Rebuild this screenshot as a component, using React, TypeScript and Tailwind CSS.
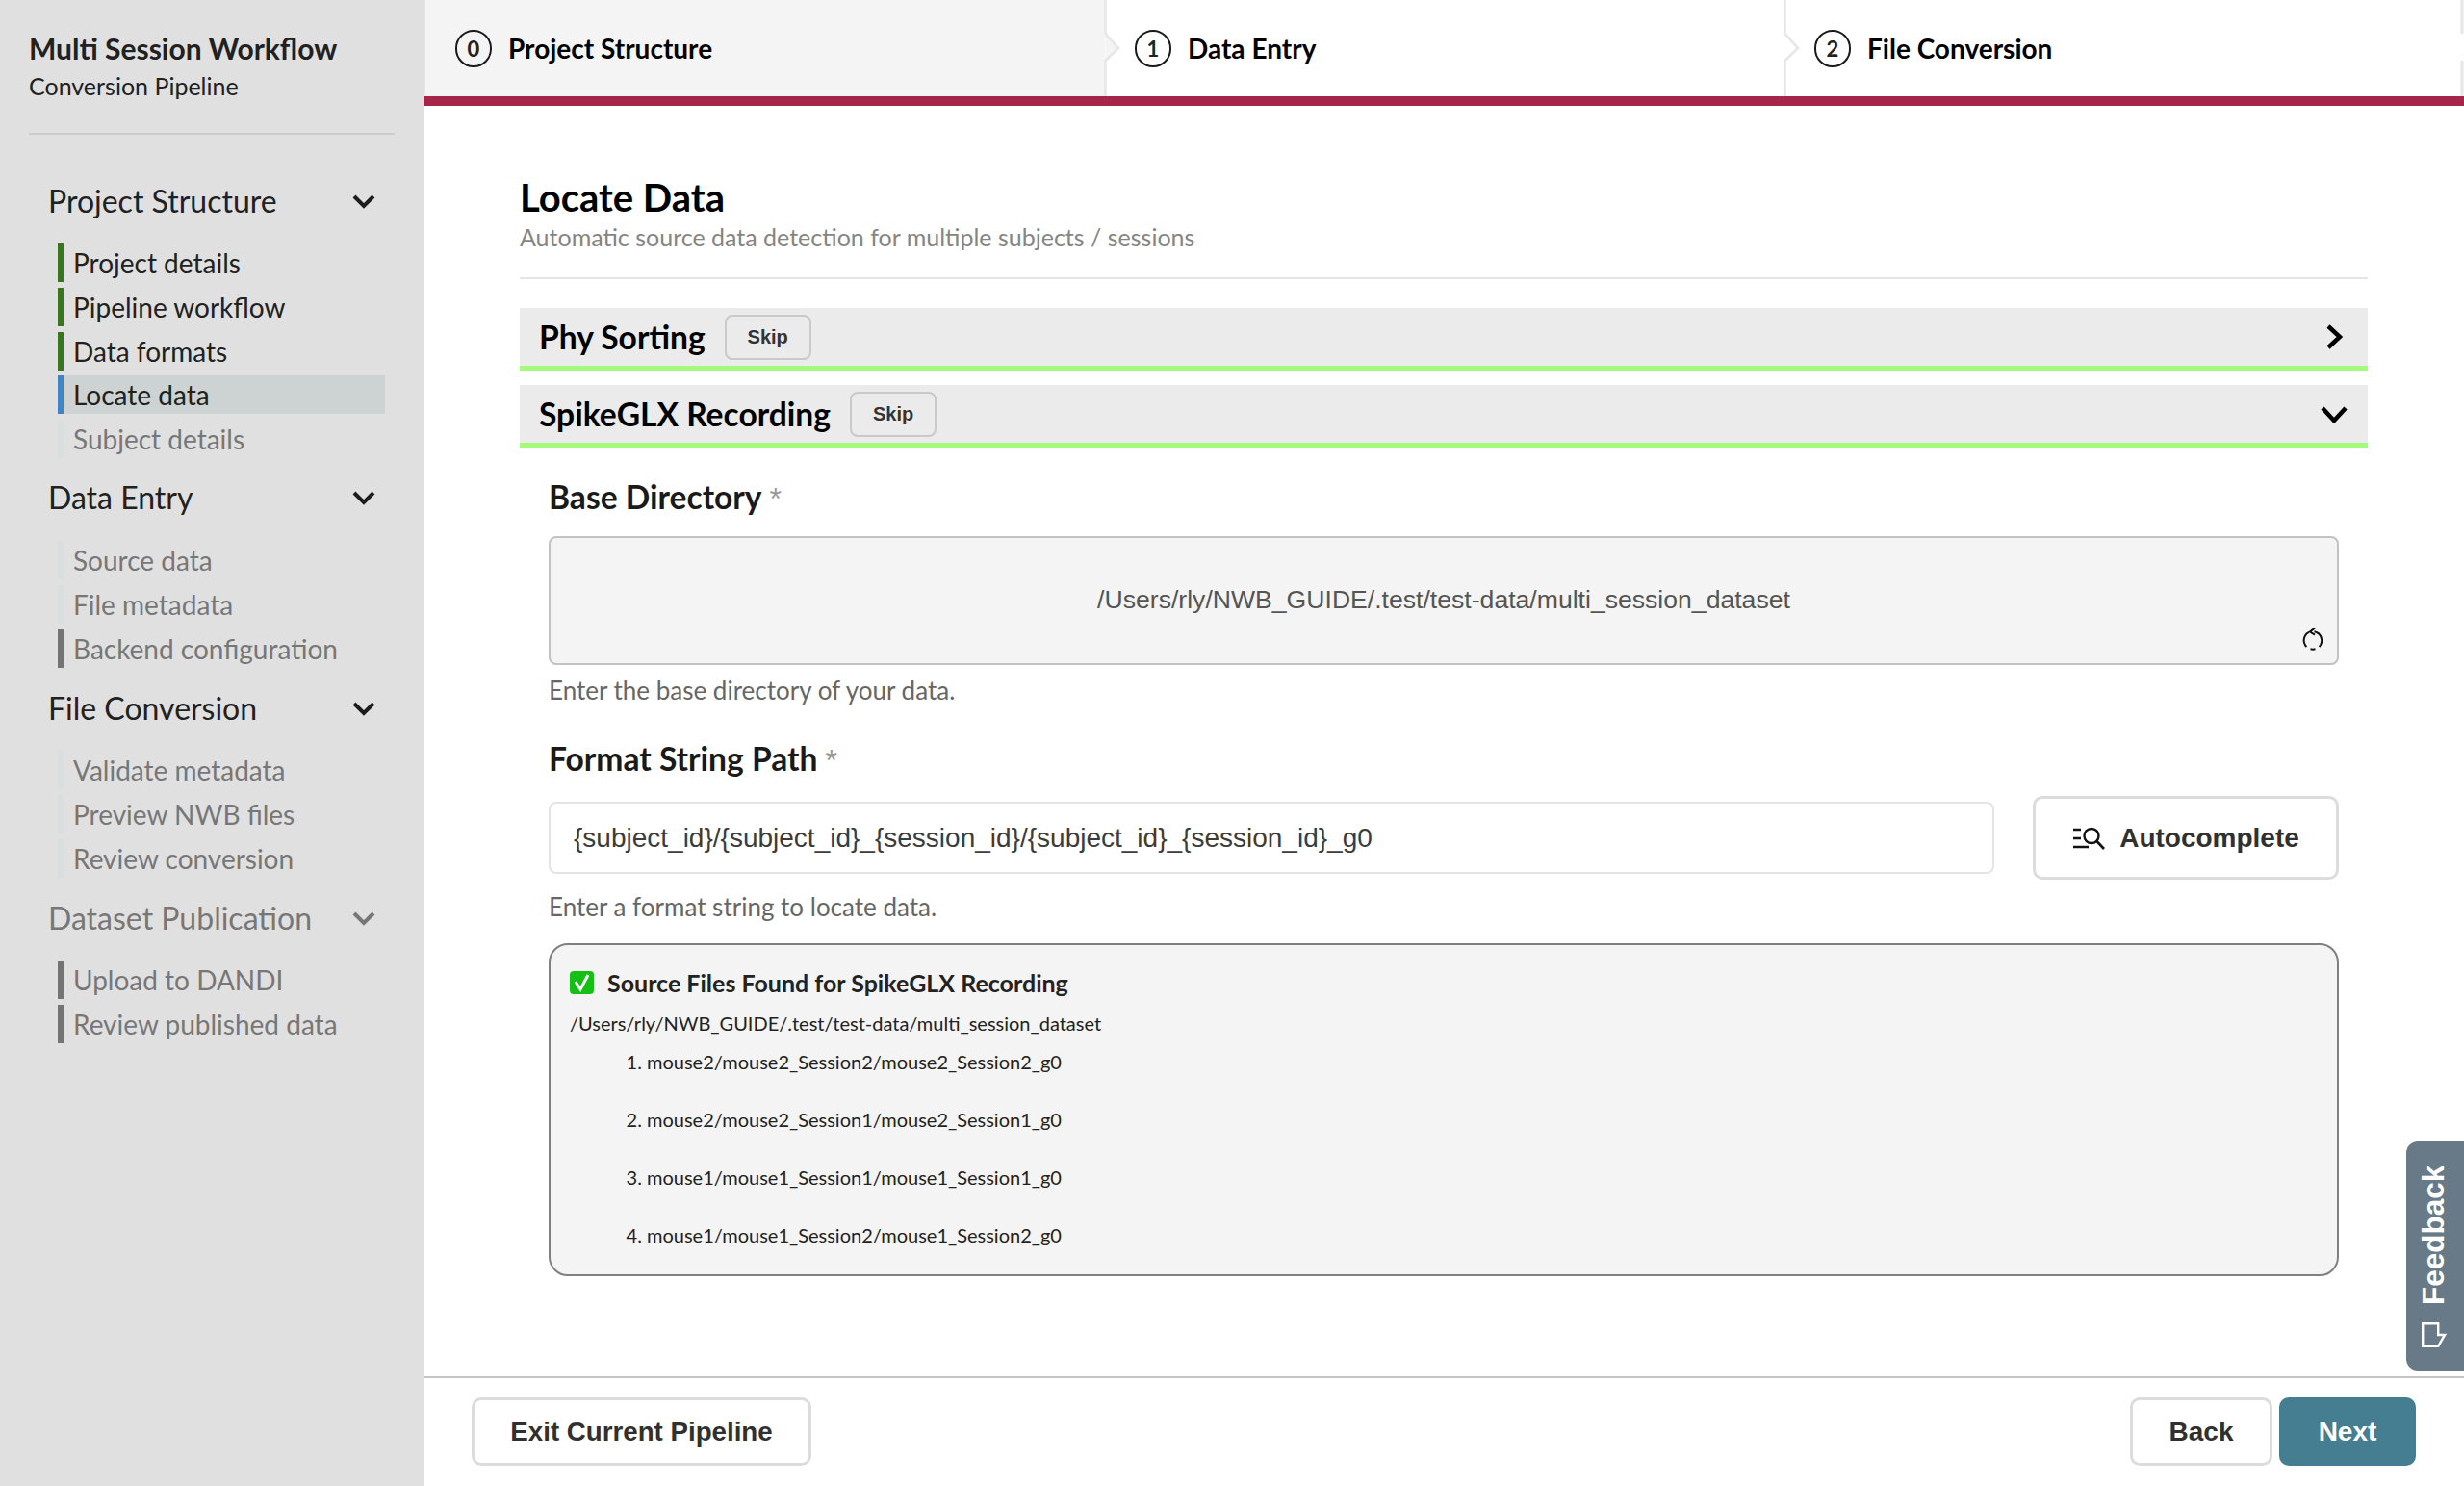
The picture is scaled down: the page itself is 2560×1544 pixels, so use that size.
import React from "react";

const lato = "font-['Lato','Noto_Sans',sans-serif]";
const helv = "font-['Liberation_Sans',Arial,sans-serif]";

type Item = { label: string; bar: string; text: string; bg?: string };
type Section = { title: string; muted?: boolean; gap: string; listGap: string; items: Item[] };

const GREEN = "bg-[#38761d]";
const BLUE = "bg-[#3d85c6]";
const LIGHT = "bg-[#d9dedf]";
const DARK = "bg-[#747474]";
const INK = "text-[#212121]";
const MUTE = "text-[#777777]";

const sections: Section[] = [
  {
    title: "Project Structure",
    gap: "mt-0",
    listGap: "mt-[22px]",
    items: [
      { label: "Project details", bar: GREEN, text: INK },
      { label: "Pipeline workflow", bar: GREEN, text: INK },
      { label: "Data formats", bar: GREEN, text: INK },
      { label: "Locate data", bar: BLUE, text: INK, bg: "bg-[#cdd3d3]" },
      { label: "Subject details", bar: LIGHT, text: MUTE },
    ],
  },
  {
    title: "Data Entry",
    gap: "mt-[19px]",
    listGap: "mt-[23px]",
    items: [
      { label: "Source data", bar: LIGHT, text: MUTE },
      { label: "File metadata", bar: LIGHT, text: MUTE },
      { label: "Backend configuration", bar: DARK, text: MUTE },
    ],
  },
  {
    title: "File Conversion",
    gap: "mt-[20.5px]",
    listGap: "mt-[22px]",
    items: [
      { label: "Validate metadata", bar: LIGHT, text: MUTE },
      { label: "Preview NWB files", bar: LIGHT, text: MUTE },
      { label: "Review conversion", bar: LIGHT, text: MUTE },
    ],
  },
  {
    title: "Dataset Publication",
    muted: true,
    gap: "mt-[20.5px]",
    listGap: "mt-[22px]",
    items: [
      { label: "Upload to DANDI", bar: DARK, text: MUTE },
      { label: "Review published data", bar: DARK, text: MUTE },
    ],
  },
];

function NavChevron({ muted }: { muted?: boolean }) {
  return (
    <svg width="24" height="16" viewBox="0 0 24 16" className={muted ? "text-[#777777]" : "text-[#1c1c1c]"}>
      <path d="M2 3 L12 13 L22 3" fill="none" stroke="currentColor" strokeWidth="4" />
    </svg>
  );
}

function Sidebar() {
  return (
    <aside className={`w-[440px] shrink-0 bg-[#e0e0e0] flex flex-col ${lato}`}>
      <div className="mx-[30px] pt-[30px] pb-[30px] border-b-2 border-[#cccccc]">
        <div className="text-[30px] leading-[40px] font-bold text-[#212121]">Multi Session Workflow</div>
        <div className="text-[25px] leading-[38px] text-[#212121]">Conversion Pipeline</div>
      </div>
      <nav className="pt-[47px] pl-[50px] pr-[40px]">
        {sections.map((s) => (
          <section key={s.title} className={s.gap}>
            <div className="h-[44px] flex items-center justify-between pr-[10px]">
              <span className={`text-[32px] ${s.muted ? MUTE : "text-[#212121]"}`}>{s.title}</span>
              <NavChevron muted={s.muted} />
            </div>
            <ul className={`${s.listGap} flex flex-col gap-[5.75px] pl-[10px]`}>
              {s.items.map((it) => (
                <li key={it.label} className={`h-[40px] flex items-center ${it.bg ?? ""}`}>
                  <span className={`w-[6px] h-full shrink-0 ${it.bar}`} />
                  <span className={`pl-[10px] text-[28px] ${it.text}`}>{it.label}</span>
                </li>
              ))}
            </ul>
          </section>
        ))}
      </nav>
    </aside>
  );
}

function Step({ n, label, active, last }: { n: number; label: string; active?: boolean; last?: boolean }) {
  return (
    <div className={`relative flex-1 h-full flex items-center pl-[31px] gap-[17px] ${active ? "bg-[#f4f4f4] border-l-2 border-[#e6e6e6]" : "bg-white"}`}>
      <span className="w-[38px] h-[39px] rounded-full border-2 border-[#1a1a1a] flex items-center justify-center text-[22px] font-bold text-[#222]">{n}</span>
      <span className="text-[28px] font-bold text-black">{label}</span>
      {last ? (
        <svg width="4" height="100" viewBox="0 0 4 100" className="absolute right-0 top-0">
          <path d="M2 0 V35 M2 63 V100" stroke="#e6e6e6" strokeWidth="3" fill="none" />
        </svg>
      ) : (
        <svg width="18" height="100" viewBox="0 0 18 100" className="absolute -right-[17px] top-0 z-10">
          <path d="M1.5 0 V35 L15 50 L1.5 63 V100" stroke="#e6e6e6" strokeWidth="2.5" fill={active ? "#f4f4f4" : "#ffffff"} />
        </svg>
      )}
    </div>
  );
}

function AccordionHead({ title, open }: { title: string; open?: boolean }) {
  return (
    <div className="h-[66px] bg-[#ebebeb] border-b-[6px] border-[#a4fb7b] flex items-center pl-[20px] pr-[20px]">
      <span className="text-[33.6px] font-bold text-black">{title}</span>
      <span className={`ml-[20px] w-[90px] h-[47px] border-2 border-[#c9c9c9] rounded-[8px] flex items-center justify-center text-[20px] font-bold text-[#333] ${helv}`}>Skip</span>
      <span className="ml-auto w-[30px] flex justify-center">
        {open ? (
          <svg width="28" height="20" viewBox="0 0 28 20"><path d="M2 4 L14 17 L26 4" fill="none" stroke="#000" strokeWidth="4.5" /></svg>
        ) : (
          <svg width="18" height="26" viewBox="0 0 18 26"><path d="M3 2 L15 13 L3 24" fill="none" stroke="#000" strokeWidth="4.5" /></svg>
        )}
      </span>
    </div>
  );
}

function FieldLabel({ children, className }: { children: string; className: string }) {
  return (
    <div className={`text-[33.6px] leading-[44px] font-bold text-[#1a1a1a] ${className}`}>
      {children}
      <span className={`ml-[8px] text-[32px] leading-none font-normal text-[#999999] ${helv}`}>*</span>
    </div>
  );
}

function Button({ children, className }: { children: React.ReactNode; className: string }) {
  return (
    <button className={`h-[71px] rounded-[10px] border-[3px] border-[#dcdcdc] bg-white text-[#303030] font-bold flex items-center justify-center ${helv} ${className}`}>
      {children}
    </button>
  );
}

const files = [
  "mouse2/mouse2_Session2/mouse2_Session2_g0",
  "mouse2/mouse2_Session1/mouse2_Session1_g0",
  "mouse1/mouse1_Session1/mouse1_Session1_g0",
  "mouse1/mouse1_Session2/mouse1_Session2_g0",
];

export default function App() {
  return (
    <div className={`relative flex h-[1544px] w-[2560px] overflow-hidden bg-white ${lato}`}>
      <Sidebar />
      <main className="flex-1 min-w-0 flex flex-col">
        <header className="h-[110px] shrink-0 flex border-b-[10px] border-[#a6264a]">
          <Step n={0} label="Project Structure" active />
          <Step n={1} label="Data Entry" />
          <Step n={2} label="File Conversion" last />
        </header>

        <div className="flex-1 min-h-0 px-[100px]">
          <h1 className="mt-[71px] text-[40px] leading-[48px] font-bold text-black">Locate Data</h1>
          <p className="text-[25px] leading-[34px] text-[#858585]">Automatic source data detection for multiple subjects / sessions</p>
          <div className="mt-[25px] h-[2px] bg-[#e5e5e5]" />

          <div className="mt-[30px] flex flex-col gap-[14px]">
            <AccordionHead title="Phy Sorting" />
            <AccordionHead title="SpikeGLX Recording" open />
          </div>

          <div className="px-[30px]">
            <FieldLabel className="mt-[28px]">Base Directory</FieldLabel>
            <div className="relative mt-[19px] h-[134px] rounded-[8px] border-2 border-[#c2c2c2] bg-[#f4f4f4] flex items-center justify-center">
              <span className={`text-[26.6px] text-[#555555] ${helv}`}>/Users/rly/NWB_GUIDE/.test/test-data/multi_session_dataset</span>
              <svg width="24" height="26" viewBox="0 0 24 26" className="absolute right-[13px] bottom-[12px]">
                <path d="M13.5 5.2 A9.5 9.5 0 0 1 18.6 21 M14.5 23.3 A9.5 9.5 0 0 1 9.5 23.3 M5.4 21 A9.5 9.5 0 0 1 8 5.8" fill="none" stroke="#111" strokeWidth="2" />
                <path d="M14 1.6 L9 5.5 L14 8.6" fill="none" stroke="#111" strokeWidth="2" />
              </svg>
            </div>
            <p className="mt-[8px] text-[26px] leading-[36px] text-[#666666]">Enter the base directory of your data.</p>

            <FieldLabel className="mt-[31px]">Format String Path</FieldLabel>
            <div className="mt-[17px] flex items-center justify-between">
              <div className="w-[1502px] h-[75px] rounded-[8px] border-2 border-[#e4e4e4] flex items-center pl-[24px]">
                <span className={`text-[28px] text-[#3c3c3c] ${helv}`}>{"{subject_id}/{subject_id}_{session_id}/{subject_id}_{session_id}_g0"}</span>
              </div>
              <Button className="w-[318px] !h-[87px] text-[28px] gap-[15px]">
                <svg width="34" height="24" viewBox="0 0 34 24">
                  <path d="M1 3 H9 M1 12 H9 M1 21 H17" stroke="#111" strokeWidth="2.4" fill="none" />
                  <circle cx="20" cy="9.5" r="7.5" stroke="#111" strokeWidth="2.4" fill="none" />
                  <path d="M25.5 15 L33 23" stroke="#111" strokeWidth="2.6" fill="none" />
                </svg>
                Autocomplete
              </Button>
            </div>
            <p className="mt-[10px] text-[26px] leading-[36px] text-[#666666]">Enter a format string to locate data.</p>

            <div className="mt-[20px] h-[346px] rounded-[20px] border-2 border-[#808080] bg-[#f4f4f4] pl-[20px] pt-[21px] text-[#222]">
              <div className="flex items-center gap-[13px] text-[25px] leading-[36px] font-bold">
                <svg width="26" height="26" viewBox="0 0 26 26" className="shrink-0">
                  <rect x="0" y="1" width="25" height="24" rx="4" fill="#15c015" />
                  <path d="M6 12 L11 20 L19 5" fill="none" stroke="#fff" strokeWidth="3" />
                </svg>
                Source Files Found for SpikeGLX Recording
              </div>
              <div className="mt-[9px] text-[20px] leading-[30px]">/Users/rly/NWB_GUIDE/.test/test-data/multi_session_dataset</div>
              <ol className="mt-[10px] list-decimal pl-[80px] flex flex-col gap-[30px] text-[20px] leading-[30px]">
                {files.map((f) => (
                  <li key={f}>{f}</li>
                ))}
              </ol>
            </div>
          </div>
        </div>

        <footer className="h-[114px] shrink-0 border-t-2 border-[#c4c4c4] pt-[20px] px-[50px] flex justify-between">
          <Button className="w-[353px] text-[27.7px]">Exit Current Pipeline</Button>
          <div className="flex gap-[7px]">
            <Button className="w-[148px] text-[28px]">Back</Button>
            <Button className="w-[142px] text-[28px] !bg-[#467e91] !border-[#467e91] !text-white">Next</Button>
          </div>
        </footer>
      </main>

      <div className={`absolute right-0 top-[1186px] w-[60px] h-[238px] bg-[#687a88] rounded-r-[12px] rotate-180 [writing-mode:vertical-rl] flex items-center justify-center gap-[18px] pl-[2px] text-white font-bold text-[31.5px] ${helv}`}>
        <svg width="26" height="26" viewBox="0 0 26 26" className="rotate-180">
          <path d="M1.2 1.2 H17.2 V13 H24 L17.2 24.8 H1.2 Z" fill="none" stroke="#fff" strokeWidth="2.4" />
        </svg>
        Feedback
      </div>
    </div>
  );
}
